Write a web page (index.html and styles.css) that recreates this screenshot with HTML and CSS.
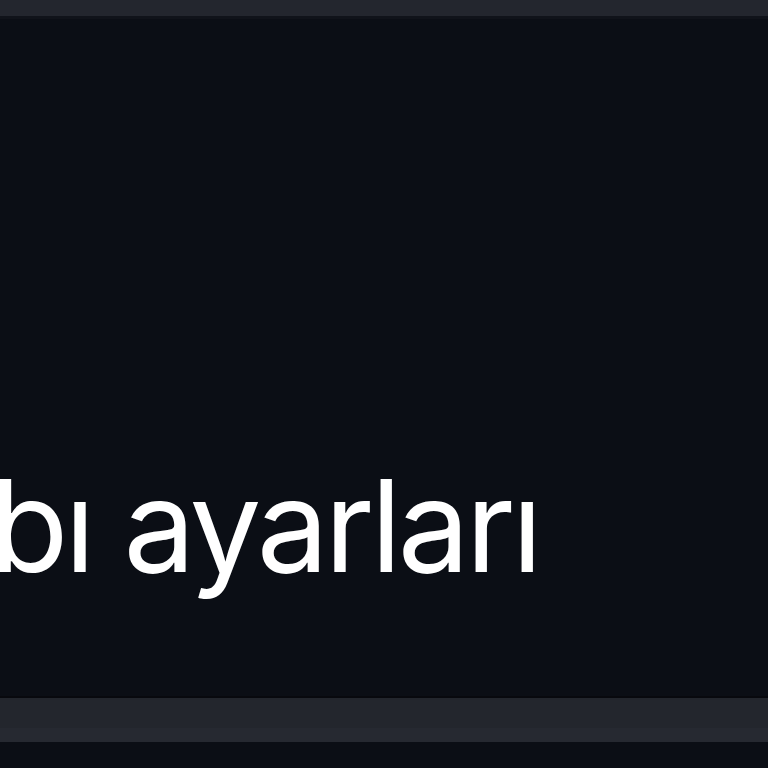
FILE: index.html
```html
<!DOCTYPE html>
<html lang="tr">
<head>
<meta charset="utf-8">
<link rel="stylesheet" href="styles.css">
</head>
<body>
<div class="page">
  <div class="topbar"></div>
  <div class="content">
    <div class="title">bı ayarları</div>
  </div>
  <div class="strip"></div>
  <div class="footer"></div>
</div>
</body>
</html>
```
FILE: styles.css
```css
html, body {
  margin: 0;
  padding: 0;
  background: #0b0e15;
  overflow: hidden;
}
.page {
  width: 768px;
  height: 768px;
  display: flex;
  flex-direction: column;
}
.topbar {
  height: 16px;
  background: #23262e;
  border-bottom: 3px solid #10131a;
}
.content {
  flex: 0 0 679px;
  box-sizing: border-box;
  padding-top: 427px;
  background: #0b0e15;
  border-bottom: 2px solid #08090e;
  overflow: hidden;
}
.title {
  font-family: "Inter", "Noto Sans", sans-serif;
  font-size: 128px;
  line-height: 160px;
  color: #ffffff;
  white-space: nowrap;
  margin-left: -10px;
  letter-spacing: -4px;
}
.strip {
  flex: 0 0 44px;
  background: linear-gradient(#23262d 0, #23262d 30px, #262931 30px, #262931 100%);
}
.footer {
  flex: 1;
  background: #0b0e15;
}
```
